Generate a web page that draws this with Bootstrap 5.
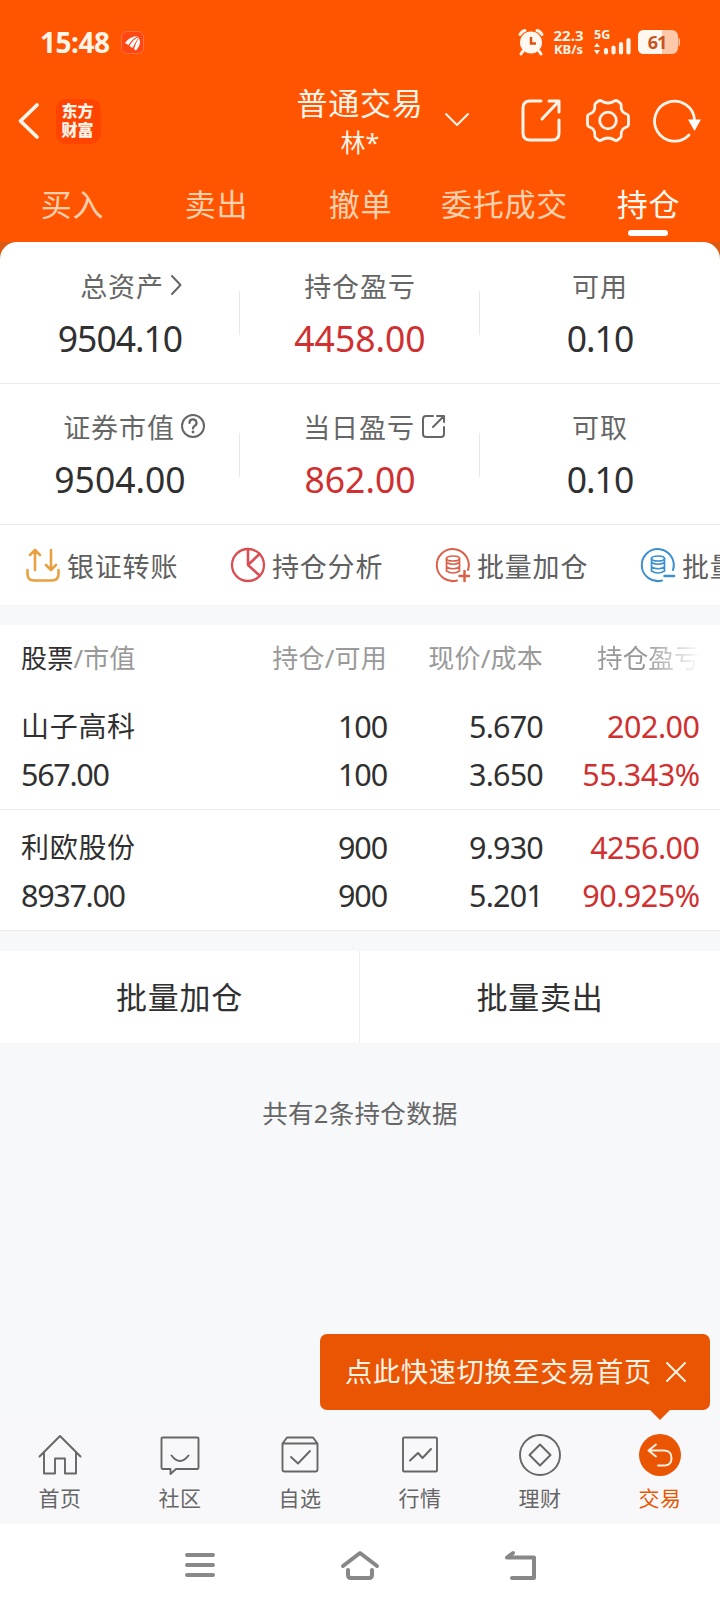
<!DOCTYPE html>
<html lang="zh-CN">
<head>
<meta charset="utf-8">
<meta name="viewport" content="width=device-width, initial-scale=1">
<title>持仓</title>
<link href="https://cdn.jsdelivr.net/npm/bootstrap@5.3.0/dist/css/bootstrap.min.css" rel="stylesheet">
<style>
body{width:720px;height:1608px;overflow:hidden;background:#f6f8fa;color:#303030;font-family:"Noto Sans","Noto Sans CJK SC",sans-serif;font-size:27px;line-height:1}
.app{height:1608px}
svg{display:block;flex:none;overflow:visible}
.ln{fill:none;stroke:currentColor;stroke-linecap:round;stroke-linejoin:round}
.top-zone{background:#ff5500;height:242px;color:#fff4ea}
.status{height:84px;padding:0 40px}
.clock{font-size:28px;font-weight:700;letter-spacing:-.5px}
.mini-logo{width:23px;height:23px;border-radius:6px;background:#ff4714;border:1px solid #ff7043;margin-left:12px}
.tiny{font-size:14px;font-weight:700;line-height:14px}
.head-row{display:grid;grid-template-columns:1fr auto 1fr;height:76px}
.head-row .side{height:74px}
.brand{width:45px;height:45px;border-radius:10px;background:#ff4400;font-size:16px;line-height:19px;font-weight:900;font-family:"Noto Sans CJK SC",sans-serif;padding:2px 2px 0 0;margin-left:17px}
.title{font-size:31px;letter-spacing:.8px;line-height:39px;height:38px}
.sub{font-size:25px;line-height:41px}
.tabs{height:82px}
.tabs>div{width:144px;font-size:31px;letter-spacing:.8px;line-height:88px;height:82px;text-align:center;color:#ffcfae;display:flex;flex-direction:column;align-items:center}
.tabs span{height:70px;padding-left:1px}
.tabs .on{color:#fff8f0}
.tabs .on::after{content:"";width:40px;height:6px;border-radius:3px;background:#fff}
.corner-bg{background:#dc5a14}
.sheet{background:#fff;border-radius:17px 17px 0 0;width:720px}
.metrics{height:141.5px;border-bottom:1.5px solid #ebebeb}
.metric{width:240px;position:relative;padding-top:26px}
.metric+.metric::before{content:"";position:absolute;left:-1px;top:49px;width:1px;height:44px;background:#e8e8e8}
.lab{height:38px;font-size:27px;letter-spacing:.9px;line-height:38px;color:#666}
.val{font-size:35.5px;line-height:44px;margin-top:10px;letter-spacing:0}
.second .metric{padding-top:25.5px}
.second .val{margin-top:9.5px}
.val.one{letter-spacing:-1px}
.red{color:#d03030}
.acts{height:80px;overflow:hidden}
.act{width:205px;padding-left:26px;gap:7px;color:#606060;letter-spacing:.8px;white-space:nowrap;flex:none}
.act span{padding-top:3px}
.gap-bar{height:20px;background:#f6f8fa}
.table-zone{background:#fff}
.g4{display:grid;grid-template-columns:187px 179px 156px 156.5px;padding-left:21px}
.g4>*{text-align:right}
.g4>*:first-child{text-align:left}
.hd{height:63px;line-height:67px;font-size:26px;letter-spacing:.2px;color:#999}
.hd b{font-weight:400;color:#303030}
.fade-x{-webkit-mask-image:linear-gradient(90deg,#000 65%,transparent 100%);mask-image:linear-gradient(90deg,#000 65%,transparent 100%);font-size:25.6px;letter-spacing:0}
.stock{height:121px;border-bottom:1.5px solid #ebebeb;font-size:30.5px;line-height:48px;padding-top:13px;letter-spacing:-.5px}
.first-row{height:122px;padding-top:14px}
.stock .nm{font-size:28px;letter-spacing:.7px}
.mv{letter-spacing:-1.3px}
.qty{letter-spacing:-1.1px}
.stock .cost{letter-spacing:-.8px}
.batch{height:92px;background:#fff;font-size:31px;letter-spacing:.8px;line-height:93px;text-align:center}
.batch>div:first-child{width:359px}
.batch>div+div{border-left:1px solid #eee;width:361px}
.count{height:378px;padding-top:52px;text-align:center;font-size:25.5px;letter-spacing:.3px;line-height:36px;color:#666}
.tabbar{height:103px;background:#f8f8fa;color:#666;position:relative}
.tabbar>.tb{width:120px;font-size:21px;letter-spacing:.5px;line-height:30px;padding-top:12px}
.tb span{margin-top:6px}
.tabbar .cur{color:#ea5500}
.tip{position:absolute;left:320px;top:-87px;width:390px;height:76px;border-radius:7px;background:#ea5504;color:#fff3e6;font-size:27.3px;letter-spacing:.6px;padding-left:25px;line-height:77px}
.tip::after{content:"";position:absolute;left:330px;top:76px;border:10px solid transparent;border-top-color:#ea5504;border-bottom:0}
.sysnav{height:84px;background:#fff;color:#888;padding:0 0 2px 1px}
</style>
</head>
<body>
<div class="app d-flex flex-column">
<header class="top-zone">
  <div class="status d-flex align-items-center">
    <div class="clock">15:48</div>
    <div class="mini-logo"><svg width="21" height="21" viewBox="0 0 21 21" fill="#fff"><path d="M3 11Q8 4 16 4Q10 7 6.500 13ZM7.500 14Q11 7 17 5Q14 9 10.500 16ZM12 17Q14 10 17 6Q20 12 14 18.500Z"/></svg></div>
    <div class="ms-auto d-flex align-items-center">
      <svg width="26" height="26" viewBox="0 0 26 26"><circle cx="13" cy="13.500" r="11" fill="#fff8f0"/><path class="ln" stroke-width="3" d="M2 5.500Q4 2 7 1.500M24 5.500Q22 2 19 1.500M5 22L3 25M21 22L23 25"/><path d="M13 8V14.500H18" fill="none" stroke="#e05010" stroke-width="2.500"/></svg>
      <div class="tiny text-center" style="margin-left:8px;width:33px"><div style="font-size:15px">22.3</div><div style="font-size:13px">KB/s</div></div>
      <div class="tiny" style="margin-left:9px;width:37px;height:25px"><div style="font-size:12.500px;line-height:10px;height:10px">5G</div>
        <svg width="37" height="15" viewBox="0 10 37 15"><path fill="currentColor" d="M0 17L3 13L6 17ZM0 20L3 24.500L6 20Z"/><path class="ln" stroke-width="4.200" d="M12 20V22.500M19.500 17.500V22.500M27 14V22.500M34.500 10V22.500"/></svg></div>
      <svg width="42" height="25" viewBox="0 0 42 25" style="margin-left:7px"><rect width="40" height="24" rx="6" fill="#ffc8a8"/><path d="M6 0H24V24H6Q0 24 0 18V6Q0 0 6 0Z" fill="#fff8f0"/><path d="M40.500 7.500Q42 8 42 10V14Q42 16 40.500 16.500Z" fill="#ffc8a8"/><text x="19" y="19" text-anchor="middle" font-family="Noto Sans" font-size="18" font-weight="700" letter-spacing="-1" fill="#c8541e">61</text></svg>
    </div>
  </div>
  <div class="head-row">
    <div class="side d-flex align-items-center" style="padding-left:18px">
      <svg width="21" height="38" viewBox="0 0 21 38"><path class="ln" stroke-width="3.800" d="M19 3L2.500 19L19 35"/></svg>
      <div class="brand text-center"><div>东方</div><div>财富</div></div>
    </div>
    <div class="text-center"><div class="title">普通交易</div><div class="sub">林*</div></div>
    <div class="side d-flex align-items-center">
      <svg width="24" height="13" viewBox="0 0 24 13" style="margin:-3px 0 0 21px"><path class="ln" stroke-width="2" d="M1 1L12 12L23 1"/></svg>
      <svg width="41" height="43" viewBox="0 0 41 43" style="margin:-2px 0 0 52px"><path class="ln" stroke-width="3" d="M20 2H9Q2 2 2 9V34Q2 41 9 41H31Q38 41 38 34V21M28 2H38V13M38 2L21 20"/></svg>
      <svg width="44" height="43" viewBox="0 0 44 43" style="margin:-2px 0 0 24px"><path class="ln" stroke-width="2.800" d="M15.500 2Q22 6 28.500 2Q30 1 31.500 2L34 3.800Q35.500 5 35.200 6.500Q34.500 13 40.500 15Q42.500 15.800 42.500 17.500V25.500Q42.500 27.200 40.500 28Q34.500 30 35.200 36.500Q35.500 38 34 39.200L31.500 41Q30 42 28.500 41Q22 37 15.500 41Q14 42 12.500 41L10 39.200Q8.500 38 8.800 36.500Q9.500 30 3.500 28Q1.500 27.200 1.500 25.500V17.500Q1.500 15.800 3.500 15Q9.500 13 8.800 6.500Q8.500 5 10 3.800L12.500 2Q14 1 15.500 2Z"/><circle class="ln" cx="22" cy="21.500" r="8.300" stroke-width="2.800"/></svg>
      <svg width="48" height="43" viewBox="0 0 48 43" style="margin-left:23px"><path class="ln" stroke-width="2.800" d="M36 35A20 20 0 1 1 41.500 20"/><path d="M35 19.500H48L41.500 31Z" fill="#fff"/></svg>
    </div>
  </div>
  <nav class="tabs d-flex"><div><span>买入</span></div><div><span>卖出</span></div><div><span>撤单</span></div><div><span>委托成交</span></div><div class="on"><span>持仓</span></div></nav>
</header>
<main>
  <div class="corner-bg"><section class="sheet">
    <div class="metrics d-flex text-center">
      <div class="metric"><div class="lab d-flex justify-content-center align-items-center" style="padding-left:22px">总资产<svg width="12" height="20" viewBox="0 0 12 20" style="margin:-4px 0 0 6px"><path class="ln" stroke-width="2" d="M2 1L10.500 10L2 19"/></svg></div><div class="val one">9504.10</div></div>
      <div class="metric"><div class="lab">持仓盈亏</div><div class="val red">4458.00</div></div>
      <div class="metric"><div class="lab">可用</div><div class="val one">0.10</div></div>
    </div>
    <div class="metrics second d-flex text-center" style="height:141px">
      <div class="metric"><div class="lab d-flex justify-content-center align-items-center" style="padding-left:28px">证券市值<svg width="24" height="24" viewBox="0 0 24 24" style="margin:-4px 0 0 6px"><circle class="ln" cx="12" cy="12" r="11" stroke-width="2"/><path class="ln" stroke-width="2.200" d="M8.500 9A3.500 3.500 0 1 1 13.500 12Q12 12.800 12 14.500"/><circle cx="12" cy="18" r="1.400" fill="currentColor"/></svg></div><div class="val">9504.00</div></div>
      <div class="metric"><div class="lab d-flex justify-content-center align-items-center" style="padding-left:28px">当日盈亏<svg width="23" height="23" viewBox="0 0 23 23" style="margin:-4px 0 0 7px"><path class="ln" stroke-width="2" d="M11 1H4Q1 1 1 4V19Q1 22 4 22H19Q22 22 22 19V12M15 1H22V7M22 1L11 12"/></svg></div><div class="val red">862.00</div></div>
      <div class="metric"><div class="lab">可取</div><div class="val one">0.10</div></div>
    </div>
    <div class="acts d-flex">
      <div class="act d-flex align-items-center"><svg width="34" height="34" viewBox="0 0 34 34" style="color:#e8a040"><path class="ln" stroke-width="2.600" d="M1.500 22V26Q1.500 32.500 8 32.500H26Q32.500 32.500 32.500 26V22M9 22V2M4 7L9 2L14 7M25 2V22M20 17L25 22L30 17"/></svg><span>银证转账</span></div>
      <div class="act d-flex align-items-center"><svg width="34" height="34" viewBox="0 0 34 34" style="color:#d94e52"><circle class="ln" cx="17" cy="17" r="16" stroke-width="2.300"/><path class="ln" stroke-width="2.600" d="M17 1V17L28.500 27.500M17 17L28.500 6"/></svg><span>持仓分析</span></div>
      <div class="act d-flex align-items-center"><svg width="34" height="34" viewBox="0 0 34 34" style="color:#dc6048"><path class="ln" stroke-width="2" d="M32 22A16 16 0 1 0 21 32.500"/><ellipse class="ln" cx="17" cy="10.500" rx="6.500" ry="2.500" stroke-width="1.700"/><path class="ln" stroke-width="1.700" d="M10.500 10.500V23Q17 27 23.500 23V10.500M10.500 14.500Q17 18 23.500 14.500M10.500 19Q17 22.500 23.500 19"/><path class="ln" stroke-width="2.500" d="M23.500 28H33M28.500 23V33"/></svg><span>批量加仓</span></div>
      <div class="act d-flex align-items-center"><svg width="34" height="34" viewBox="0 0 34 34" style="color:#3b8fd0"><path class="ln" stroke-width="2" d="M32 22A16 16 0 1 0 21 32.500"/><ellipse class="ln" cx="17" cy="10.500" rx="6.500" ry="2.500" stroke-width="1.700"/><path class="ln" stroke-width="1.700" d="M10.500 10.500V23Q17 27 23.500 23V10.500M10.500 14.500Q17 18 23.500 14.500M10.500 19Q17 22.500 23.500 19"/><path class="ln" stroke-width="2.500" d="M23.500 28H33"/></svg><span>批量卖出</span></div>
    </div>
  </section></div>
  <div class="gap-bar"></div>
  <section class="table-zone">
    <div class="g4 hd"><div><b>股票</b>/市值</div><div>持仓/可用</div><div>现价/成本</div><div class="fade-x">持仓盈亏</div></div>
    <div class="g4 stock first-row"><div><div class="nm">山子高科</div><div class="mv">567.00</div></div><div class="qty">100<br>100</div><div class="cost">5.670<br>3.650</div><div class="red">202.00<br>55.343%</div></div>
    <div class="g4 stock"><div><div class="nm">利欧股份</div><div class="mv">8937.00</div></div><div class="qty">900<br>900</div><div class="cost">9.930<br>5.201</div><div class="red">4256.00<br>90.925%</div></div>
  </section>
  <div class="gap-bar"></div>
  <div class="batch d-flex"><div>批量加仓</div><div>批量卖出</div></div>
  <div class="count">共有2条持仓数据</div>
</main>
<nav class="tabbar d-flex">
  <div class="tip d-flex align-items-center"><span>点此快速切换至交易首页</span><svg width="20" height="20" viewBox="0 0 20 20" style="margin-left:14px"><path class="ln" stroke-width="2" d="M1 1L19 19M19 1L1 19"/></svg></div>
  <div class="tb d-flex flex-column align-items-center"><svg width="44" height="44" viewBox="0 0 44 44"><path class="ln" stroke-width="1.900" d="M1.500 23.500L22 3L42.500 23.500M6 20V40.500H17V25.500H27V40.500H38V20"/></svg><span>首页</span></div>
  <div class="tb d-flex flex-column align-items-center"><svg width="44" height="44" viewBox="0 0 44 44"><path class="ln" stroke-width="1.900" d="M4.500 4.500H39.500Q40.500 4.500 40.500 5.500V34.500Q40.500 36 39.500 36H18L12.500 41V36H4.500Q3.500 36 3.500 34.500V5.500Q3.500 4.500 4.500 4.500ZM13.500 22.500Q22 33.500 30.500 22.500"/></svg><span>社区</span></div>
  <div class="tb d-flex flex-column align-items-center"><svg width="44" height="44" viewBox="0 0 44 44"><path class="ln" stroke-width="1.900" d="M4.500 10.500L9 4.500H35L39.500 10.500V36.500Q39.500 38.500 37.500 38.500H6.500Q4.500 38.500 4.500 36.500ZM4.500 10.500H39.500M13 24L20 30.500L32 18"/></svg><span>自选</span></div>
  <div class="tb d-flex flex-column align-items-center"><svg width="44" height="44" viewBox="0 0 44 44"><rect class="ln" x="5" y="4.500" width="34" height="34" rx="1" stroke-width="1.900"/><path class="ln" stroke-width="2" d="M12 27.500L20 20L24.500 25L33 16"/></svg><span>行情</span></div>
  <div class="tb d-flex flex-column align-items-center"><svg width="44" height="44" viewBox="0 0 44 44"><circle class="ln" cx="22" cy="22" r="20" stroke-width="1.900"/><path class="ln" stroke-width="2" d="M22 11.500L32.500 22L22 32.500L11.500 22Z"/></svg><span>理财</span></div>
  <div class="tb cur d-flex flex-column align-items-center"><svg width="44" height="44" viewBox="0 0 44 44"><circle cx="22" cy="22" r="21" fill="#ea5504"/><path class="ln" style="stroke:#fff0e0" stroke-width="2" d="M18 11.500L10.500 17.500L18 23.500M10.500 17.500H26.500Q33.500 18 33.500 25Q33.500 32 27 32.500H20"/></svg><span>交易</span></div>
</nav>
<nav class="sysnav d-flex justify-content-center align-items-center">
  <svg width="30" height="26" viewBox="0 0 30 26"><path class="ln" stroke-width="4" d="M2 3H28M2 13H28M2 23H28"/></svg>
  <svg width="38" height="30" viewBox="0 0 38 30" style="margin:0 125px 0 126px"><path class="ln" stroke-width="4" d="M2 16L19 3L36 16M7 20V25Q7 28 10 28H28Q31 28 31 25V20"/></svg>
  <svg width="33" height="30" viewBox="0 0 33 30"><path class="ln" stroke-width="4" d="M9 3L3 7.500H30V28H8"/></svg>
</nav>
</div>
<script src="https://cdn.jsdelivr.net/npm/bootstrap@5.3.0/dist/js/bootstrap.bundle.min.js"></script>
</body>
</html>
